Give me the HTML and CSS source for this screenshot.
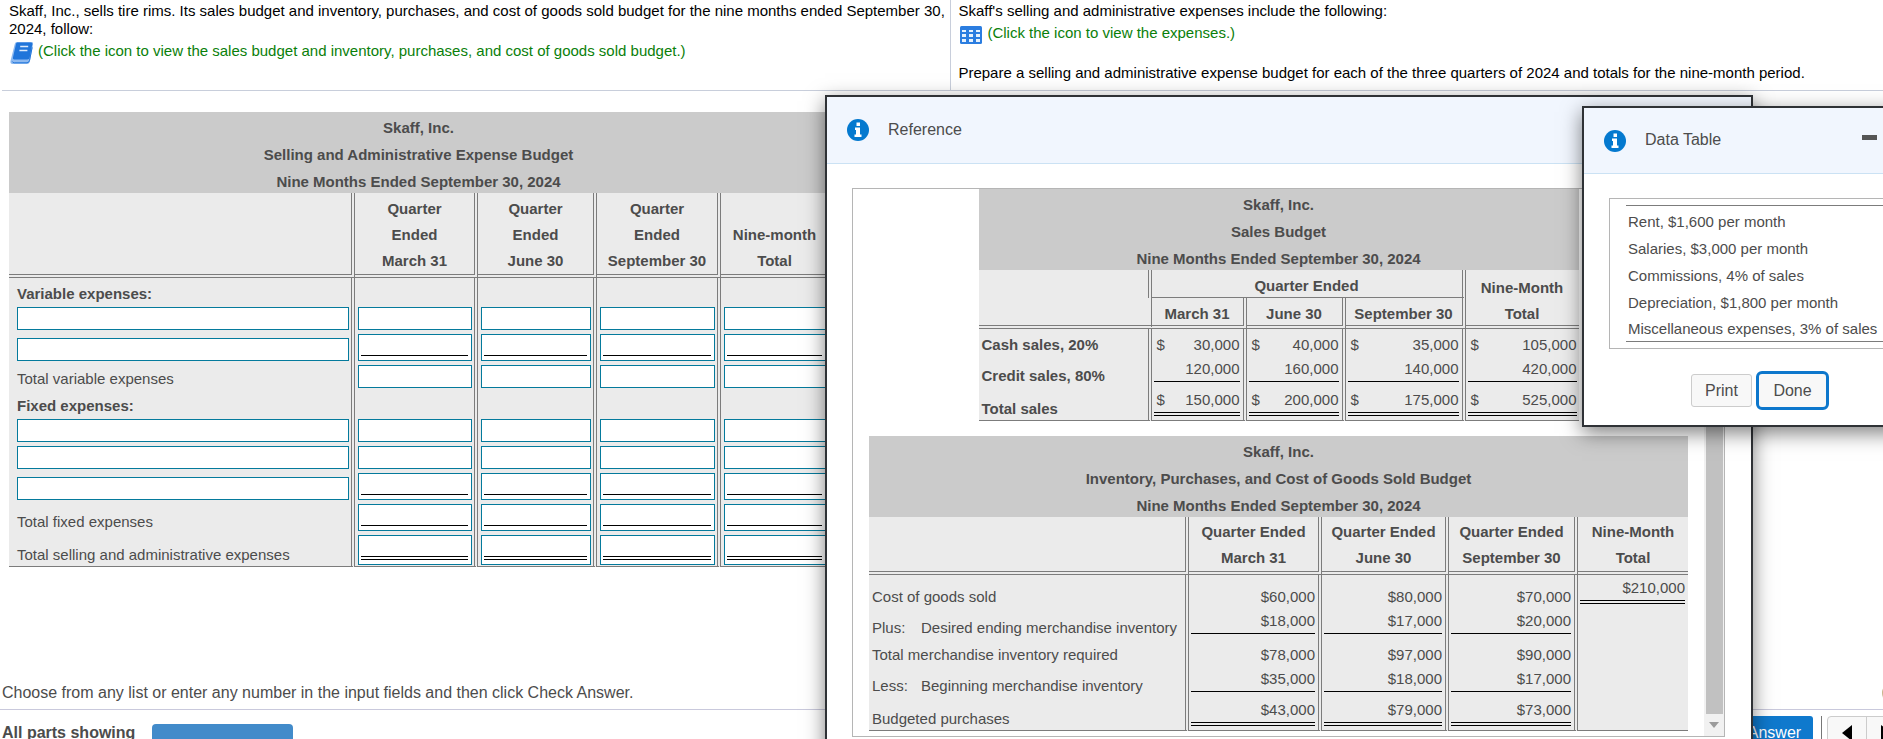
FILE: index.html
```html
<!DOCTYPE html>
<html lang="en">
<head>
<meta charset="utf-8">
<title>Selling and Administrative Expense Budget</title>
<link rel="stylesheet" href="styles.css">
</head>
<body>
<div class="page">
  <header class="problem">
    <section class="prompt">
      <p>Skaff, Inc., sells tire rims. Its sales budget and inventory, purchases, and cost of goods sold budget for the nine months ended September 30, 2024, follow:</p>
      <a class="resource" href="#reference">
        <svg class="resource-icon" viewBox="0 0 24 24" width="24" height="24" aria-hidden="true">
          <path d="M7 1h14.500q2 0 1.600 2L20 20q-.5 3-3 3H2.500q-2.500 0-2-3L4.500 4Q5 1 7 1z" fill="#8db9f0"/>
          <path d="M7.200 1.500h13.800q1.700 0 1.300 1.700l-2.600 13.300q-.4 1.900-2.400 1.900H4.200q-1.600 0-1.300-1.700L6 3Q6.200 1.500 7.200 1.500z" fill="#2075da"/>
          <path d="M2.300 20.500q.5 1.300 2 1.300H17q2 0 2.500-2.400l2.700-13" fill="none" stroke="#2075da" stroke-width="1"/>
          <path d="M10.200 5.500h8M9.400 9.500h8" stroke="#dceafb" stroke-width="1.500"/>
        </svg>
        <span>(Click the icon to view the sales budget and inventory, purchases, and cost of goods sold budget.)</span>
      </a>
    </section>
    <section class="prompt prompt-right">
      <p>Skaff's selling and administrative expenses include the following:</p>
      <a class="resource" href="#data-table">
        <svg class="resource-icon" viewBox="0 0 24 24" width="24" height="24" aria-hidden="true">
          <rect x="1" y="3" width="22" height="18" rx="1.500" fill="#2b7de0"/>
          <g fill="#e6f1fd">
            <rect x="3" y="7" width="4" height="2"/><rect x="10" y="7" width="4" height="2"/><rect x="17" y="7" width="4" height="2"/>
            <rect x="3" y="11" width="4" height="3"/><rect x="10" y="11" width="4" height="3"/><rect x="17" y="11" width="4" height="3"/>
            <rect x="3" y="16" width="4" height="3"/><rect x="10" y="16" width="4" height="3"/><rect x="17" y="16" width="4" height="3"/>
          </g>
        </svg>
        <span>(Click the icon to view the expenses.)</span>
      </a>
      <p class="task">Prepare a selling and administrative expense budget for each of the three quarters of 2024 and totals for the nine-month period.</p>
    </section>
  </header>

  <main class="work">
    <table class="sheet worksheet">
      <colgroup><col class="w-label"><col class="w-q1"><col class="w-q2"><col class="w-q3"><col class="w-total"></colgroup>
      <thead>
        <tr class="title"><th colspan="5">Skaff, Inc.</th></tr>
        <tr class="title"><th colspan="5">Selling and Administrative Expense Budget</th></tr>
        <tr class="title"><th colspan="5">Nine Months Ended September 30, 2024</th></tr>
        <tr class="heads"><th></th><th>Quarter<br>Ended<br>March 31</th><th>Quarter<br>Ended<br>June 30</th><th>Quarter<br>Ended<br>September 30</th><th>Nine-month<br>Total</th></tr>
      </thead>
      <tbody>
        <tr class="plain"><th>Variable expenses:</th><td></td><td></td><td></td><td></td></tr>
        <tr class="plain"><td><div class="entry"><input aria-label="Variable expense 1"></div></td><td><div class="entry"><input aria-label="Variable expense 1, March 31"></div></td><td><div class="entry"><input aria-label="Variable expense 1, June 30"></div></td><td><div class="entry"><input aria-label="Variable expense 1, September 30"></div></td><td><div class="entry"><input aria-label="Variable expense 1, total"></div></td></tr>
        <tr class="single"><td><div class="entry"><input aria-label="Variable expense 2"></div></td><td><div class="entry one"><input aria-label="Variable expense 2, March 31"></div></td><td><div class="entry one"><input aria-label="Variable expense 2, June 30"></div></td><td><div class="entry one"><input aria-label="Variable expense 2, September 30"></div></td><td><div class="entry one"><input aria-label="Variable expense 2, total"></div></td></tr>
        <tr class="plain"><td>Total variable expenses</td><td><div class="entry"><input aria-label="Total variable expenses, March 31"></div></td><td><div class="entry"><input aria-label="Total variable expenses, June 30"></div></td><td><div class="entry"><input aria-label="Total variable expenses, September 30"></div></td><td><div class="entry"><input aria-label="Total variable expenses, total"></div></td></tr>
        <tr class="plain"><th>Fixed expenses:</th><td></td><td></td><td></td><td></td></tr>
        <tr class="plain"><td><div class="entry"><input aria-label="Fixed expense 1"></div></td><td><div class="entry"><input aria-label="Fixed expense 1, March 31"></div></td><td><div class="entry"><input aria-label="Fixed expense 1, June 30"></div></td><td><div class="entry"><input aria-label="Fixed expense 1, September 30"></div></td><td><div class="entry"><input aria-label="Fixed expense 1, total"></div></td></tr>
        <tr class="plain"><td><div class="entry"><input aria-label="Fixed expense 2"></div></td><td><div class="entry"><input aria-label="Fixed expense 2, March 31"></div></td><td><div class="entry"><input aria-label="Fixed expense 2, June 30"></div></td><td><div class="entry"><input aria-label="Fixed expense 2, September 30"></div></td><td><div class="entry"><input aria-label="Fixed expense 2, total"></div></td></tr>
        <tr class="single"><td><div class="entry"><input aria-label="Fixed expense 3"></div></td><td><div class="entry one"><input aria-label="Fixed expense 3, March 31"></div></td><td><div class="entry one"><input aria-label="Fixed expense 3, June 30"></div></td><td><div class="entry one"><input aria-label="Fixed expense 3, September 30"></div></td><td><div class="entry one"><input aria-label="Fixed expense 3, total"></div></td></tr>
        <tr class="single"><td>Total fixed expenses</td><td><div class="entry one"><input aria-label="Total fixed expenses, March 31"></div></td><td><div class="entry one"><input aria-label="Total fixed expenses, June 30"></div></td><td><div class="entry one"><input aria-label="Total fixed expenses, September 30"></div></td><td><div class="entry one"><input aria-label="Total fixed expenses, total"></div></td></tr>
        <tr class="last"><td>Total selling and administrative expenses</td><td><div class="entry two"><input aria-label="Total expenses, March 31"></div></td><td><div class="entry two"><input aria-label="Total expenses, June 30"></div></td><td><div class="entry two"><input aria-label="Total expenses, September 30"></div></td><td><div class="entry two"><input aria-label="Total expenses, total"></div></td></tr>
      </tbody>
    </table>
  </main>

  <p class="hint">Choose from any list or enter any number in the input fields and then click Check Answer.<span class="help" aria-hidden="true"></span></p>
  <footer class="bar">
    <strong>All parts showing</strong>
    <span class="progress"></span>
    <div class="actions">
      <button class="check">Check Answer</button>
      <span class="divider"></span>
      <div class="pager">
        <button aria-label="Previous"><svg width="10" height="16" viewBox="0 0 10 16"><path d="M10 0v16L0 8z"/></svg></button>
        <button aria-label="Next"><svg width="10" height="16" viewBox="0 0 10 16"><path d="M0 0v16l10-8z"/></svg></button>
      </div>
    </div>
  </footer>
</div>

<section class="dialog reference" id="reference" role="dialog" aria-labelledby="ref-title">
  <div class="dialog-head">
    <svg class="info" viewBox="0 0 22 22" width="22" height="22" aria-hidden="true"><circle cx="11" cy="11" r="11" fill="#0479cf"/><path d="M9.500 3.500h3.500v3.500h-3.500zM8 8.500h5v7h1.500V18h-7v-2.500H9V11H8z" fill="#fff"/></svg>
    <h2 id="ref-title">Reference</h2>
  </div>
  <div class="viewer">
    <div class="viewer-body">
      <table class="sheet sales">
        <colgroup><col class="s-label"><col class="s-q1"><col class="s-q2"><col class="s-q3"><col class="s-total"></colgroup>
        <thead>
          <tr class="title"><th colspan="5">Skaff, Inc.</th></tr>
          <tr class="title"><th colspan="5">Sales Budget</th></tr>
          <tr class="title"><th colspan="5">Nine Months Ended September 30, 2024</th></tr>
          <tr class="group"><th></th><th class="span" colspan="3">Quarter Ended</th><th class="tail">Nine-Month</th></tr>
          <tr class="subheads"><th></th><th>March 31</th><th>June 30</th><th>September 30</th><th>Total</th></tr>
        </thead>
        <tbody>
          <tr class="plain"><th>Cash sales, 20%</th><td><div class="money"><span>$</span><span>30,000</span></div></td><td><div class="money"><span>$</span><span>40,000</span></div></td><td><div class="money"><span>$</span><span>35,000</span></div></td><td><div class="money"><span>$</span><span>105,000</span></div></td></tr>
          <tr class="single"><th>Credit sales, 80%</th><td><div class="money one">120,000</div></td><td><div class="money one">160,000</div></td><td><div class="money one">140,000</div></td><td><div class="money one">420,000</div></td></tr>
          <tr class="last"><th>Total sales</th><td><div class="money two"><span>$</span><span>150,000</span></div></td><td><div class="money two"><span>$</span><span>200,000</span></div></td><td><div class="money two"><span>$</span><span>175,000</span></div></td><td><div class="money two"><span>$</span><span>525,000</span></div></td></tr>
        </tbody>
      </table>

      <table class="sheet inventory">
        <colgroup><col class="i-label"><col class="i-q1"><col class="i-q2"><col class="i-q3"><col class="i-total"></colgroup>
        <thead>
          <tr class="title"><th colspan="5">Skaff, Inc.</th></tr>
          <tr class="title"><th colspan="5">Inventory, Purchases, and Cost of Goods Sold Budget</th></tr>
          <tr class="title"><th colspan="5">Nine Months Ended September 30, 2024</th></tr>
          <tr class="heads"><th></th><th>Quarter Ended<br>March 31</th><th>Quarter Ended<br>June 30</th><th>Quarter Ended<br>September 30</th><th>Nine-Month<br>Total</th></tr>
        </thead>
        <tbody>
          <tr class="double"><td>Cost of goods sold</td><td><div class="money">$60,000</div></td><td><div class="money">$80,000</div></td><td><div class="money">$70,000</div></td><td><div class="money two">$210,000</div></td></tr>
          <tr class="single"><td><span class="lead">Plus:</span>Desired ending merchandise inventory</td><td><div class="money one">$18,000</div></td><td><div class="money one">$17,000</div></td><td><div class="money one">$20,000</div></td><td></td></tr>
          <tr class="plain"><td>Total merchandise inventory required</td><td><div class="money">$78,000</div></td><td><div class="money">$97,000</div></td><td><div class="money">$90,000</div></td><td></td></tr>
          <tr class="single"><td><span class="lead">Less:</span>Beginning merchandise inventory</td><td><div class="money one">$35,000</div></td><td><div class="money one">$18,000</div></td><td><div class="money one">$17,000</div></td><td></td></tr>
          <tr class="last"><td>Budgeted purchases</td><td><div class="money two">$43,000</div></td><td><div class="money two">$79,000</div></td><td><div class="money two">$73,000</div></td><td></td></tr>
        </tbody>
      </table>
    </div>
    <div class="scroll" aria-hidden="true">
      <span class="thumb"></span>
      <svg class="down" viewBox="0 0 10 6" width="10" height="6"><path d="M0 0h10L5 6z" fill="#9b9b9b"/></svg>
    </div>
  </div>
</section>

<section class="dialog data" id="data-table" role="dialog" aria-labelledby="data-title">
  <div class="dialog-head">
    <svg class="info" viewBox="0 0 22 22" width="22" height="22" aria-hidden="true"><circle cx="11" cy="11" r="11" fill="#0479cf"/><path d="M9.500 3.500h3.500v3.500h-3.500zM8 8.500h5v7h1.500V18h-7v-2.500H9V11H8z" fill="#fff"/></svg>
    <h2 id="data-title">Data Table</h2>
    <button class="minimize" aria-label="Minimize"></button>
  </div>
  <div class="facts">
    <ul>
      <li>Rent, $1,600 per month</li>
      <li>Salaries, $3,000 per month</li>
      <li>Commissions, 4% of sales</li>
      <li>Depreciation, $1,800 per month</li>
      <li>Miscellaneous expenses, 3% of sales</li>
    </ul>
  </div>
  <div class="dialog-actions">
    <button class="btn">Print</button>
    <button class="btn btn-focus">Done</button>
  </div>
</section>
</body>
</html>
```

FILE: styles.css
```css
* { box-sizing: border-box; }

body {
  margin: 0;
  height: 100vh;
  overflow: hidden;
  position: relative;
  background: #fff;
  color: #4c4c4c;
  font: 15px/18px "Liberation Sans", Arial, sans-serif;
}

p, h2, ul { margin: 0; padding: 0; }
button, input { font: inherit; color: inherit; }

.page { height: 100vh; display: flex; flex-direction: column; }

/* problem statement */
.problem {
  display: flex;
  margin-left: 2px;
  height: 91px;
  border-bottom: 1px solid #c8cedb;
  color: #000;
}
.prompt { flex: 949 0 0; min-width: 0; padding: 2px 0 0 7px; }
.prompt-right { flex: 932 0 0; border-left: 1px solid #c8cedb; }
.resource {
  display: flex;
  height: 24px;
  margin-top: 2px;
  color: #0a800a;
  text-decoration: none;
}
.resource-icon { margin: 1px 4px 0 1px; flex: none; }
.resource span { line-height: 22px; white-space: nowrap; }
.task { margin-top: 18px; }

/* ruled tables */
.work { flex: 1; padding: 21px 9px 0; }
.sheet { border-collapse: separate; border-spacing: 0; table-layout: fixed; }
.sheet th, .sheet td {
  background: #ebebeb;
  padding: 0 3px 3px;
  line-height: 17px;
  vertical-align: bottom;
  text-align: left;
  border-right: 4px double #7c7c7c;
}
.sheet tr > :last-child { border-right: 0; }
.sheet .title th {
  background: #cbcbcb;
  height: 27px;
  padding: 4px 0 0;
  line-height: 23px;
  text-align: center;
}
.sheet .heads th {
  padding: 2px 0 0;
  line-height: 26px;
  text-align: center;
  vertical-align: middle;
  border-bottom: 4px double #7c7c7c;
}
.sheet .plain > * { height: 27px; }
.sheet .single > * { height: 31px; }
.sheet .double > * { height: 33px; }
.sheet .last > * { height: 34px; border-bottom: 1px solid #7c7c7c; }

.worksheet { width: 819px; }
.worksheet .heads th { height: 85px; }
.worksheet .heads th:last-child { padding-top: 28px; }
.worksheet tbody td, .worksheet tbody th { padding: 2px 2px 2px 3px; }
.worksheet tbody tr > :first-child { padding-left: 8px; padding-bottom: 3px; }
.worksheet tbody tr > :first-child:has(.entry) { padding-bottom: 2px; }
.worksheet .last > td + td { padding-bottom: 1px; }
.w-label { width: 346px; }
.w-q1 { width: 123px; }
.w-q2 { width: 119px; }
.w-q3 { width: 124px; }
.w-total { width: 107px; }

.entry { height: 23px; border: 1px solid #047a9c; background: #fff; }
.entry input {
  display: block;
  width: 100%;
  height: 21px;
  padding: 0;
  border: 0;
  outline: 0;
  background: transparent;
}
.entry.one, .entry.two { padding: 0 3px 4px 2px; }
.entry.one { height: 27px; }
.entry.two { height: 30px; }
.entry.one input { border-bottom: 1px solid #000; }
.entry.two input { height: 24px; border-bottom: 4px double #000; }

.money { display: flex; justify-content: space-between; padding-left: 3px; }
.money:not(:has(span)) { justify-content: flex-end; }
.money.one, .money.two { line-height: 21px; padding-bottom: 2px; }
.money.one { border-bottom: 1px solid #000; margin-bottom: 2px; }
.money.two { border-bottom: 4px double #000; margin-bottom: 1px; }
.sheet td:has(> .money) { padding-left: 2px; }

.sales { width: 600px; margin: 0 auto; }
.sales td:last-child { padding-right: 2px; }
.s-label { width: 173px; }
.s-q1 { width: 95px; }
.s-q2 { width: 99px; }
.s-q3 { width: 120px; }
.s-total { width: 113px; }
.sheet .group th { height: 28px; text-align: center; padding: 0 0 3px; }
.sheet .group .span { border-bottom: 1px solid #7c7c7c; }
.sheet .group .tail { padding-bottom: 2px; }
.sheet .subheads th {
  height: 31px;
  padding: 0 0 3px;
  text-align: center;
  border-bottom: 4px double #7c7c7c;
}
.sheet .subheads th:first-child { border-right: 1px solid #7c7c7c; }

.inventory { width: 819px; margin: 15px auto 0; }
.inventory .heads th { height: 58px; padding-top: 1px; padding-bottom: 0; }
.i-label { width: 320px; }
.i-q1 { width: 133px; }
.i-q2 { width: 127px; }
.i-q3 { width: 129px; }
.i-total { width: 110px; }
.lead { display: inline-block; width: 49px; }

/* bottom bar */
.hint {
  position: relative;
  height: 26px;
  padding-left: 2px;
  font-size: 16px;
  line-height: 20px;
}
.help {
  position: absolute;
  top: 0;
  right: -19px;
  width: 20px;
  height: 20px;
  border-radius: 50%;
  background: #c9b48c;
}
.bar {
  flex: none;
  display: flex;
  align-items: flex-start;
  height: 30px;
  padding: 6px 0 0 2px;
  overflow: hidden;
  border-top: 1px solid #c9c9dc;
  font-size: 16px;
}
.bar strong { padding-top: 8px; }
.progress {
  width: 141px;
  height: 30px;
  margin: 8px 0 0 17px;
  border-radius: 4px;
  background: #428bca;
}
.actions { display: flex; margin-left: auto; height: 34px; }
.check {
  width: 126px;
  border: 0;
  border-radius: 3px;
  background: #0f79cd;
  color: #fff;
}
.divider { width: 1px; margin: 0 5px 0 8px; background: #777; }
.pager { display: flex; width: 56px; }
.pager button {
  flex: none;
  width: 40px;
  padding: 0;
  border: 1px solid #ccc;
  border-radius: 4px 0 0 4px;
  background: #f8f8f8;
}
.pager button + button { margin-left: -1px; border-radius: 0; }
.pager svg { display: block; margin: auto; }

/* floating windows */
.dialog {
  position: absolute;
  background: #fff;
  border: 2px solid #2f3236;
  box-shadow: 0 6px 19px rgba(0, 0, 0, .5);
}
.reference { left: 825px; top: 95px; width: 928px; height: 720px; }
.data { left: 1582px; top: 106px; width: 356px; }
.dialog-head {
  display: flex;
  align-items: center;
  height: 67px;
  padding: 0 20px;
  background: #f1f6fe;
  border-bottom: 1px solid #cbe2f4;
}
.dialog-head h2 {
  margin-left: 19px;
  font-size: 16px;
  font-weight: normal;
  line-height: 20px;
}
.data .dialog-head { height: 66px; padding-right: 59px; }
.data .dialog-head h2 { padding-bottom: 2px; }
.minimize {
  width: 15px;
  height: 5px;
  margin: 0 0 6px auto;
  padding: 0;
  border: 0;
  background: #555;
}

.viewer {
  display: flex;
  height: 549px;
  margin: 24px 26px 0 25px;
  border: 1px solid #b5b5b5;
}
.viewer-body { flex: 1; min-width: 0; }
.scroll {
  display: flex;
  flex-direction: column;
  align-items: center;
  width: 20px;
  padding: 20px 0 8px;
  background: #f1f1f1;
}
.thumb { flex: 1; width: 17px; background: #c1c1c1; }
.down { margin-top: 8px; }

.facts {
  margin: 24px 25px 0;
  padding: 6px 16px;
  border: 1px solid #b5b5b5;
}
.facts ul {
  list-style: none;
  padding: 4px 0 1px 2px;
  border: 1px solid #7c7c7c;
  border-width: 1px 0;
  white-space: nowrap;
}
.facts li { line-height: 23px; margin-bottom: 4px; }
.facts li:last-child { margin-bottom: 0; line-height: 22px; }
.dialog-actions {
  display: flex;
  justify-content: center;
  align-items: center;
  gap: 4px;
  padding: 22px 0 15px;
}
.btn {
  width: 61px;
  height: 33px;
  padding: 0;
  font-size: 16px;
  background: #f8f8f8;
  border: 1px solid #ccc;
  border-radius: 3px;
}
.btn-focus {
  width: 73px;
  height: 39px;
  border: 3px solid #0d77cc;
  border-radius: 6px;
}
```
